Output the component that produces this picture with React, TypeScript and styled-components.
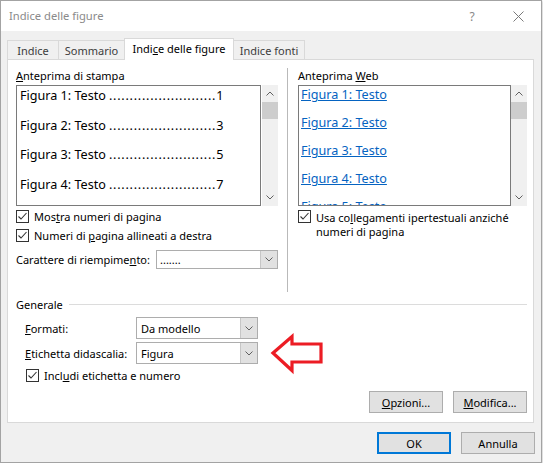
import React from "react";
import styled, { createGlobalStyle, css } from "styled-components";

const GlobalStyle = createGlobalStyle`
  html, body { margin: 0; padding: 0; background: #ffffff; }
  body {
    font-family: "Segoe UI", "Noto Sans", "Open Sans", sans-serif;
    font-size: 11px;
    color: #000;
  }
  * { box-sizing: border-box; }
`;

const Dialog = styled.div`
  width: 542px;
  height: 463px;
  border: 1px solid #a3a3a3;
  background: #f0f0f0;
  display: flex;
  flex-direction: column;
  box-shadow: 1px 1px 2px rgba(0, 0, 0, 0.18);
`;

const TitleBar = styled.div`
  height: 30px;
  background: #ffffff;
  display: flex;
  align-items: center;
`;

const TitleText = styled.div`
  flex: 1;
  padding-left: 8px;
  color: #8a8a8a;
  font-size: 11.2px;
  padding-bottom: 1px;
`;

const CaptionButton = styled.div`
  width: 46px;
  height: 30px;
  display: flex;
  align-items: center;
  justify-content: center;
  color: #888;
  font-size: 12px;
`;

const Body = styled.div`
  flex: 1;
  display: flex;
  flex-direction: column;
  padding: 7px 0 0 6px;
`;

const TabBar = styled.div`
  display: flex;
  align-items: flex-end;
  height: 21px;
  position: relative;
  z-index: 1;
`;

const Tab = styled.div<{ $active?: boolean; $w: number }>`
  width: ${(p) => p.$w}px;
  height: 19px;
  margin-left: -1px;
  &:first-child { margin-left: 0; }
  border: 1px solid #d9d9d9;
  border-bottom: none;
  background: #f0f0f0;
  color: #3c3c3c;
  display: flex;
  align-items: center;
  justify-content: center;
  padding-top: 1px;
  white-space: nowrap;
  ${(p) =>
    p.$active &&
    css`
      height: 22px;
      background: #ffffff;
      color: #000;
      margin-bottom: -1px;
      padding-top: 0;
      padding-bottom: 2px;
    `}
`;

const Panel = styled.div`
  position: relative;
  width: 527px;
  height: 364px;
  border: 1px solid #d9d9d9;
  background: #ffffff;
  padding: 8px 6px 0 8px;
  display: flex;
  flex-direction: column;
`;

const TopSection = styled.div`
  display: flex;
  height: 224px;
`;

const Column = styled.div<{ $w?: number }>`
  display: flex;
  flex-direction: column;
  ${(p) => (p.$w ? `width: ${p.$w}px;` : "flex: 1;")}
`;

const VDivider = styled.div`
  width: 1px;
  background: #b9b9b9;
  margin: 0 10px 0 9px;
`;

const Label = styled.div`
  line-height: 15px;
  height: 15px;
  margin-bottom: 2px;
  white-space: nowrap;
`;

const ListRow = styled.div<{ $gap: number }>`
  display: flex;
  gap: ${(p) => p.$gap}px;
  height: 121px;
`;

const PreviewBox = styled.div<{ $w: number; $pad: number; $gap: number }>`
  width: ${(p) => p.$w}px;
  height: 121px;
  border: 1px solid #7a7a7a;
  overflow: hidden;
  padding-left: ${(p) => p.$pad}px;
  display: flex;
  flex-direction: column;
  gap: ${(p) => p.$gap}px;
`;

const PrintItem = styled.div`
  font-size: 12.6px;
  line-height: 20px;
  white-space: nowrap;
  flex: none;
`;

const Leader = styled.span`
  padding-left: 3px;
  letter-spacing: 0.75px;
`;

const WebItem = styled.div`
  font-size: 12.6px;
  line-height: 18px;
  color: #0563c1;
  text-decoration: underline;
  white-space: nowrap;
  flex: none;
`;

const ScrollBar = styled.div`
  width: 16px;
  height: 121px;
  background: #f0f0f0;
  display: flex;
  flex-direction: column;
`;

const ScrollArrow = styled.div`
  height: 17px;
  display: flex;
  align-items: center;
  justify-content: center;
`;

const Thumb = styled.div`
  height: 17px;
  background: #cdcdcd;
`;

const Spacer = styled.div`
  flex: 1;
`;

const CheckRow = styled.label<{ $indent?: number; $top?: number }>`
  display: flex;
  align-items: center;
  height: 19px;
  padding-left: ${(p) => p.$indent || 0}px;
  margin-top: ${(p) => p.$top || 0}px;
  gap: 5px;
  white-space: nowrap;
`;

const WrapCheckRow = styled.label`
  display: flex;
  align-items: flex-start;
  gap: 5px;
  margin-top: 1px;
  padding-top: 3px;
`;

const WrapText = styled.span`
  line-height: 14px;
  margin-top: 1px;
  white-space: nowrap;
`;

const Box = styled.span`
  width: 13px;
  height: 13px;
  border: 1px solid #333333;
  background: #fff;
  display: inline-flex;
  align-items: center;
  justify-content: center;
  flex: none;
`;

const FieldRow = styled.div<{ $indent?: number; $top: number; $labelW: number }>`
  display: flex;
  align-items: center;
  margin-top: ${(p) => p.$top}px;
  padding-left: ${(p) => p.$indent || 0}px;
  white-space: nowrap;
  & > span:first-child {
    width: ${(p) => p.$labelW}px;
    flex: none;
  }
`;

const Select = styled.div<{ $h: number; $w: number }>`
  width: ${(p) => p.$w}px;
  height: ${(p) => p.$h}px;
  border: 1px solid #adadad;
  display: flex;
  align-items: stretch;
  background: #fff;
`;

const SelectText = styled.div<{ $pad: number }>`
  flex: 1;
  display: flex;
  align-items: center;
  padding-left: ${(p) => p.$pad}px;
`;

const SelectButton = styled.div`
  width: 17px;
  background: #e1e1e1;
  border-left: 1px solid #c6c6c6;
  display: flex;
  align-items: center;
  justify-content: center;
`;

const GroupHeader = styled.div`
  display: flex;
  align-items: center;
  gap: 6px;
  margin-top: 5px;
  line-height: 15px;
  &::after {
    content: "";
    flex: 1;
    height: 1px;
    background: #dcdcdc;
  }
`;

const ButtonRow = styled.div<{ $top: number; $right?: number }>`
  display: flex;
  justify-content: flex-end;
  gap: 10px;
  margin-top: ${(p) => p.$top}px;
  margin-right: ${(p) => p.$right || 0}px;
`;

const Button = styled.div<{ $default?: boolean }>`
  width: 74px;
  height: 22px;
  background: #e1e1e1;
  border: 1px solid #adadad;
  display: flex;
  align-items: center;
  justify-content: center;
  ${(p) =>
    p.$default &&
    css`
      border: 2px solid #0078d7;
    `}
`;

const Arrow = styled.svg`
  position: absolute;
  left: 262px;
  top: 273px;
`;

const Chevron = ({ up }: { up?: boolean }) => (
  <svg width="8" height="5" viewBox="0 0 8 5">
    <polyline
      points={up ? "0.5,4.5 4,1 7.5,4.5" : "0.5,0.5 4,4 7.5,0.5"}
      fill="none"
      stroke="#606060"
      strokeWidth="1"
    />
  </svg>
);

const Check = () => (
  <Box>
    <svg width="11" height="11" viewBox="0 0 11 11">
      <polyline points="1.5,5.5 4,8 9.5,2" fill="none" stroke="#333" strokeWidth="1.1" />
    </svg>
  </Box>
);

const Scroll = () => (
  <ScrollBar>
    <ScrollArrow>
      <Chevron up />
    </ScrollArrow>
    <Thumb />
    <Spacer />
    <ScrollArrow>
      <Chevron />
    </ScrollArrow>
  </ScrollBar>
);

const DropDown = ({ text, w, h, pad }: { text: string; w: number; h: number; pad: number }) => (
  <Select $w={w} $h={h}>
    <SelectText $pad={pad}>{text}</SelectText>
    <SelectButton>
      <Chevron />
    </SelectButton>
  </Select>
);

const DOTS = ".".repeat(26);

export default function App() {
  const printItems = [
    ["Figura 1: Testo", "1"],
    ["Figura 2: Testo", "3"],
    ["Figura 3: Testo", "5"],
    ["Figura 4: Testo", "7"],
  ];
  const webItems = ["Figura 1: Testo", "Figura 2: Testo", "Figura 3: Testo", "Figura 4: Testo", "Figura 5: Testo"];
  return (
    <>
      <GlobalStyle />
      <Dialog>
        <TitleBar>
          <TitleText>Indice delle figure</TitleText>
          <CaptionButton>?</CaptionButton>
          <CaptionButton>
            <svg width="11" height="11" viewBox="0 0 11 11">
              <path d="M0.5 0.5 L10.5 10.5 M10.5 0.5 L0.5 10.5" stroke="#7a7a7a" strokeWidth="1" />
            </svg>
          </CaptionButton>
        </TitleBar>
        <Body>
          <TabBar>
            <Tab $w={52}>Indice</Tab>
            <Tab $w={67}>Sommario</Tab>
            <Tab $w={110} $active>
              <span>
                Indi<u>c</u>e delle figure
              </span>
            </Tab>
            <Tab $w={72}>Indice fonti</Tab>
          </TabBar>
          <Panel>
            <TopSection>
              <Column $w={262}>
                <Label>
                  <u>A</u>nteprima di stampa
                </Label>
                <ListRow $gap={1}>
                  <PreviewBox $w={245} $pad={3} $gap={9.7}>
                    {printItems.map(([t, n]) => (
                      <PrintItem key={t}>
                        {t}
                        <Leader>{DOTS}</Leader>
                        {n}
                      </PrintItem>
                    ))}
                  </PreviewBox>
                  <Scroll />
                </ListRow>
                <CheckRow $top={1}>
                  <Check />
                  <span>
                    Mos<u>t</u>ra numeri di pagina
                  </span>
                </CheckRow>
                <CheckRow>
                  <Check />
                  <span>
                    Numeri di <u>p</u>agina allineati a destra
                  </span>
                </CheckRow>
                <FieldRow $top={5} $labelW={140}>
                  <span>
                    Carattere di riempime<u>n</u>to:
                  </span>
                  <DropDown text="......." w={122} h={19} pad={3} />
                </FieldRow>
              </Column>
              <VDivider />
              <Column>
                <Label>
                  Anteprima <u>W</u>eb
                </Label>
                <ListRow $gap={0}>
                  <PreviewBox $w={213} $pad={2} $gap={10}>
                    {webItems.map((t) => (
                      <WebItem key={t}>{t}</WebItem>
                    ))}
                  </PreviewBox>
                  <Scroll />
                </ListRow>
                <WrapCheckRow>
                  <Check />
                  <WrapText>
                    Usa co<u>l</u>legamenti ipertestuali anziché
                    <br />
                    numeri di pagina
                  </WrapText>
                </WrapCheckRow>
              </Column>
            </TopSection>
            <GroupHeader>Generale</GroupHeader>
            <FieldRow $indent={9} $top={5} $labelW={111}>
              <span>
                <u>F</u>ormati:
              </span>
              <DropDown text="Da modello" w={122} h={22} pad={4} />
            </FieldRow>
            <FieldRow $indent={9} $top={3} $labelW={111}>
              <span>
                <u>E</u>tichetta didascalia:
              </span>
              <DropDown text="Figura" w={122} h={22} pad={4} />
            </FieldRow>
            <CheckRow $indent={10} $top={2}>
              <Check />
              <span>
                Incl<u>u</u>di etichetta e numero
              </span>
            </CheckRow>
            <ButtonRow $top={6}>
              <Button>
                <span>
                  <u>O</u>pzioni...
                </span>
              </Button>
              <Button>
                <span>
                  <u>M</u>odifica...
                </span>
              </Button>
            </ButtonRow>
            <Arrow width="56" height="42" viewBox="0 0 56 42">
              <polygon
                points="3,20 22,3.5 22,11 51,11 51,29 22,29 22,37.5"
                fill="none"
                stroke="#ec1c24"
                strokeWidth="3.2"
                strokeLinejoin="miter"
              />
            </Arrow>
          </Panel>
          <ButtonRow $top={9} $right={6}>
            <Button $default>OK</Button>
            <Button>Annulla</Button>
          </ButtonRow>
        </Body>
      </Dialog>
    </>
  );
}
